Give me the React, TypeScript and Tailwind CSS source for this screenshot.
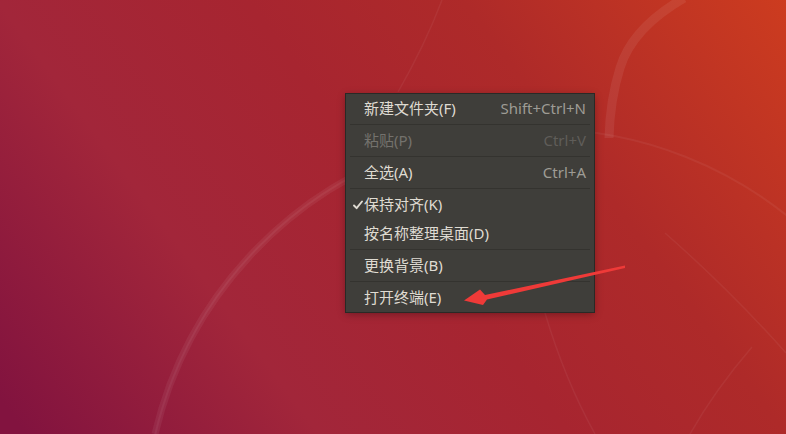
const font = "font-['Noto_Sans','Noto_Sans_CJK_SC',sans-serif]";

type Item = {
  label: string;
  shortcut?: string;
  disabled?: boolean;
  checked?: boolean;
};

const groups: Item[][] = [
  [{ label: "新建文件夹(F)", shortcut: "Shift+Ctrl+N" }],
  [{ label: "粘贴(P)", shortcut: "Ctrl+V", disabled: true }],
  [{ label: "全选(A)", shortcut: "Ctrl+A" }],
  [{ label: "保持对齐(K)", checked: true }, { label: "按名称整理桌面(D)" }],
  [{ label: "更换背景(B)" }],
  [{ label: "打开终端(E)" }],
];

function Wallpaper() {
  return (
    <svg className="absolute inset-0" width="786" height="434" viewBox="0 0 786 434">
      <defs>
        <linearGradient id="wall" x1="60" y1="480" x2="760" y2="-40" gradientUnits="userSpaceOnUse">
          <stop offset="0" stopColor="#82133f" />
          <stop offset="0.27" stopColor="#a2263a" />
          <stop offset="0.5" stopColor="#a72530" />
          <stop offset="0.7" stopColor="#ae2a29" />
          <stop offset="1" stopColor="#cd3c1f" />
        </linearGradient>
      </defs>
      <rect width="786" height="434" fill="url(#wall)" />
      {/* big circle */}
      <circle cx="540" cy="524" r="395" fill="none" stroke="#fff" strokeOpacity="0.05" strokeWidth="2" />
      <path d="M 155 434 A 395 395 0 0 1 420 148" fill="none" stroke="#fff" strokeOpacity="0.06" strokeWidth="7" />
      {/* thick band top right */}
      <path d="M 684 -2 Q 632 28 620 68 Q 610 100 609 138" fill="none" stroke="#fff" strokeOpacity="0.07" strokeWidth="9" />
      {/* faint lines */}
      <path d="M 442 0 Q 425 45 398 92" fill="none" stroke="#fff" strokeOpacity="0.05" strokeWidth="1.5" />
      <path d="M 545 313 Q 565 380 595 434" fill="none" stroke="#fff" strokeOpacity="0.05" strokeWidth="1.5" />
      <path d="M 752 347 Q 715 390 690 434" fill="none" stroke="#fff" strokeOpacity="0.05" strokeWidth="1.5" />
      <path d="M 665 233 Q 730 290 786 353" fill="none" stroke="#fff" strokeOpacity="0.05" strokeWidth="1.5" />
    </svg>
  );
}

function Check() {
  return (
    <svg width="10" height="10" viewBox="0 0 10 10" className="absolute left-[7px] top-[10px]">
      <path d="M1 5.5 L3.6 8.2 L9 1.5" fill="none" stroke="#dfdbd2" strokeWidth="1.9" strokeLinecap="round" strokeLinejoin="round" />
    </svg>
  );
}

function MenuRow({ item }: { item: Item }) {
  return (
    <div className="relative flex h-[29px] items-center justify-between pl-[18px] pr-[8px] text-[15px] leading-none">
      {item.checked && <Check />}
      <span className={item.disabled ? "text-[#74726d]" : "text-[#dfdbd2]"}>{item.label}</span>
      {item.shortcut && (
        <span className={item.disabled ? "text-[#5f5d59]" : "text-[#9e9c95]"}>{item.shortcut}</span>
      )}
    </div>
  );
}

export default function App() {
  return (
    <div className={`relative h-[434px] w-[786px] overflow-hidden ${font}`}>
      <Wallpaper />

      {/* context menu */}
      <div className="absolute left-[346px] top-[94px] flex w-[248px] flex-col bg-[#3f3e3a] shadow-[0_2px_8px_rgba(0,0,0,0.35)] outline outline-1 outline-[#2a2926]">
        {groups.map((g, gi) => (
          <div key={gi}>
            {gi > 0 && (
              <div className="flex h-[3px] items-center px-[4px]">
                <div className="h-px w-full bg-[#34332f]" />
              </div>
            )}
            {g.map((it) => (
              <MenuRow key={it.label} item={it} />
            ))}
          </div>
        ))}
      </div>

      {/* annotation arrow */}
      <svg className="absolute left-0 top-0" width="786" height="434" viewBox="0 0 786 434">
        <polygon points="625,265.5 485,295 480,289.5 464,300.5 483,305 487,299.5 625,268" fill="#ef3a38" />
      </svg>
    </div>
  );
}
